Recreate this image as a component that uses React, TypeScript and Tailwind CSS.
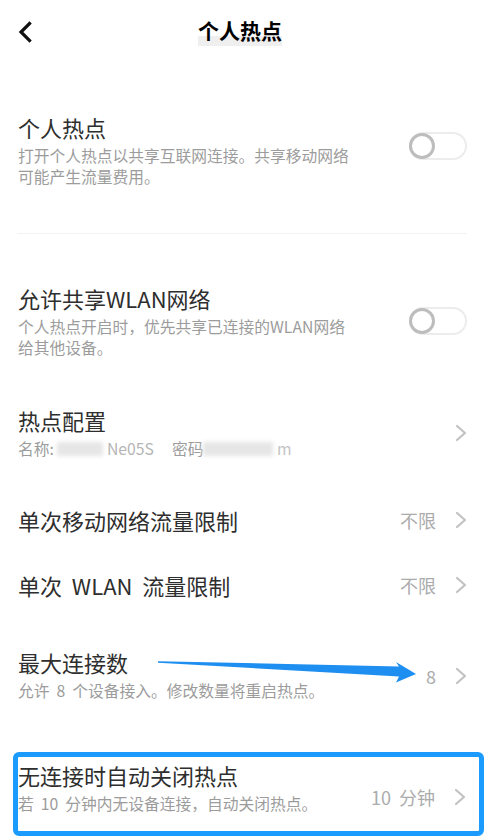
import { ReactNode } from "react";

const BackIcon = () => (
  <svg width="16" height="22" viewBox="0 0 16 22" fill="none">
    <path d="M12.5 2.5 L4 11 L12.5 19.5" stroke="#111" strokeWidth="3.2" strokeLinecap="square" />
  </svg>
);

const Chevron = () => (
  <svg width="12" height="18" viewBox="0 0 12 18" fill="none" className="shrink-0">
    <path d="M2 2 L10 9 L2 16" stroke="#c2c2c2" strokeWidth="2.2" strokeLinecap="round" strokeLinejoin="round" />
  </svg>
);

const Toggle = () => (
  <div className="relative w-[58px] h-[28px] rounded-full border-2 border-[#ececec] bg-white shrink-0">
    <div className="absolute -left-[2px] -top-[1px] w-[26px] h-[26px] rounded-full border-[3px] border-[#bdbdbd] bg-white" />
  </div>
);

const Title = ({ children }: { children: ReactNode }) => (
  <div className="text-[22px] leading-[24px] text-[#2e2e2e] whitespace-pre">{children}</div>
);

const Desc = ({ children }: { children: ReactNode }) => (
  <div className="mt-[6px] text-[15.75px] leading-[21px] text-[#9c9c9c] whitespace-pre">{children}</div>
);

const Value = ({ children }: { children: ReactNode }) => (
  <span className="text-[18px] leading-[24px] text-[#ababab] whitespace-pre mr-[19px]">{children}</span>
);

// blurred stand-in for masked hotspot name / password
const Smudge = ({ w }: { w: string }) => (
  <span className={`inline-block ${w} h-[14px] align-middle bg-[#e6e6e6] blur-[2px]`} />
);

export default function App() {
  return (
    <div className="w-[494px] h-[838px] overflow-hidden bg-white font-['Noto_Sans_CJK_SC',sans-serif]">
      <header className="h-16 flex items-center pl-[17px]">
        <BackIcon />
        <div className="relative ml-[165px]">
          <div className="absolute left-0 right-0 top-[16px] h-[10px] bg-[#efefef]" />
          <span className="relative text-[21px] leading-[21px] font-bold text-black">个人热点</span>
        </div>
      </header>

      {/* hotspot switch */}
      <div className="mt-[51px] flex pl-[18px] pr-[27px]">
        <div className="flex-1">
          <Title>个人热点</Title>
          <Desc>
            打开个人热点以共享互联网连接。共享移动网络{"\n"}可能产生流量费用。
          </Desc>
        </div>
        <div className="mt-[17px]">
          <Toggle />
        </div>
      </div>

      <div className="mt-[46px] h-px bg-[#f2f2f2] ml-[17px] mr-[27px]" />

      {/* share wlan */}
      <div className="mt-[52px] flex pl-[18px] pr-[27px]">
        <div className="flex-1">
          <Title>允许共享WLAN网络</Title>
          <Desc>
            个人热点开启时，优先共享已连接的WLAN网络{"\n"}给其他设备。
          </Desc>
        </div>
        <div className="mt-[21px]">
          <Toggle />
        </div>
      </div>

      {/* hotspot config */}
      <div className="mt-[50px] flex pl-[18px] pr-[27px]">
        <div className="flex-1">
          <Title>热点配置</Title>
          <div className="mt-[6px] flex items-center text-[15.75px] leading-[21px] text-[#9c9c9c] whitespace-pre">
            <span>名称: </span>
            <Smudge w="w-[46px]" />
            <span className="text-[#b5b5b5]"> Ne05S</span>
            <span className="ml-[18px]">密码</span>
            <Smudge w="w-[70px]" />
            <span className="text-[#c4c4c4]"> m</span>
          </div>
        </div>
        <div className="mt-[16px]">
          <Chevron />
        </div>
      </div>

      {/* per-session mobile limit */}
      <div className="mt-[49px] flex items-center pl-[18px] pr-[27px]">
        <div className="flex-1">
          <Title>单次移动网络流量限制</Title>
        </div>
        <Value>不限</Value>
        <Chevron />
      </div>

      {/* per-session wlan limit */}
      <div className="mt-[41px] flex items-center pl-[18px] pr-[27px]">
        <div className="flex-1">
          <Title>单次  WLAN  流量限制</Title>
        </div>
        <Value>不限</Value>
        <Chevron />
      </div>

      {/* max connections */}
      <div className="relative mt-[53px] flex items-center pl-[18px] pr-[27px]">
        <div className="flex-1">
          <Title>最大连接数</Title>
          <Desc>允许  8  个设备接入。修改数量将重启热点。</Desc>
        </div>
        <Value>8</Value>
        <Chevron />
        <svg className="absolute left-[150px] top-[6px] pointer-events-none" width="280" height="30" viewBox="150 658 280 30">
          <polygon
            points="158,663.2 399,668.5 396,664 416,676 396,684.5 399,678.5 158,664.8"
            fill="#1e8ff0"
          />
        </svg>
      </div>

      {/* auto-off, highlighted */}
      <div className="mt-[51px] ml-[13px] mr-[10px] rounded-md border-[5px] border-[#1c9bff] flex pt-[6px] pb-[17px] pr-[13px]">
        <div className="flex-1">
          <Title>无连接时自动关闭热点</Title>
          <Desc>若  10  分钟内无设备连接，自动关闭热点。</Desc>
        </div>
        <div className="mt-[17px] flex items-center">
          <Value>10  分钟</Value>
          <Chevron />
        </div>
      </div>
    </div>
  );
}
